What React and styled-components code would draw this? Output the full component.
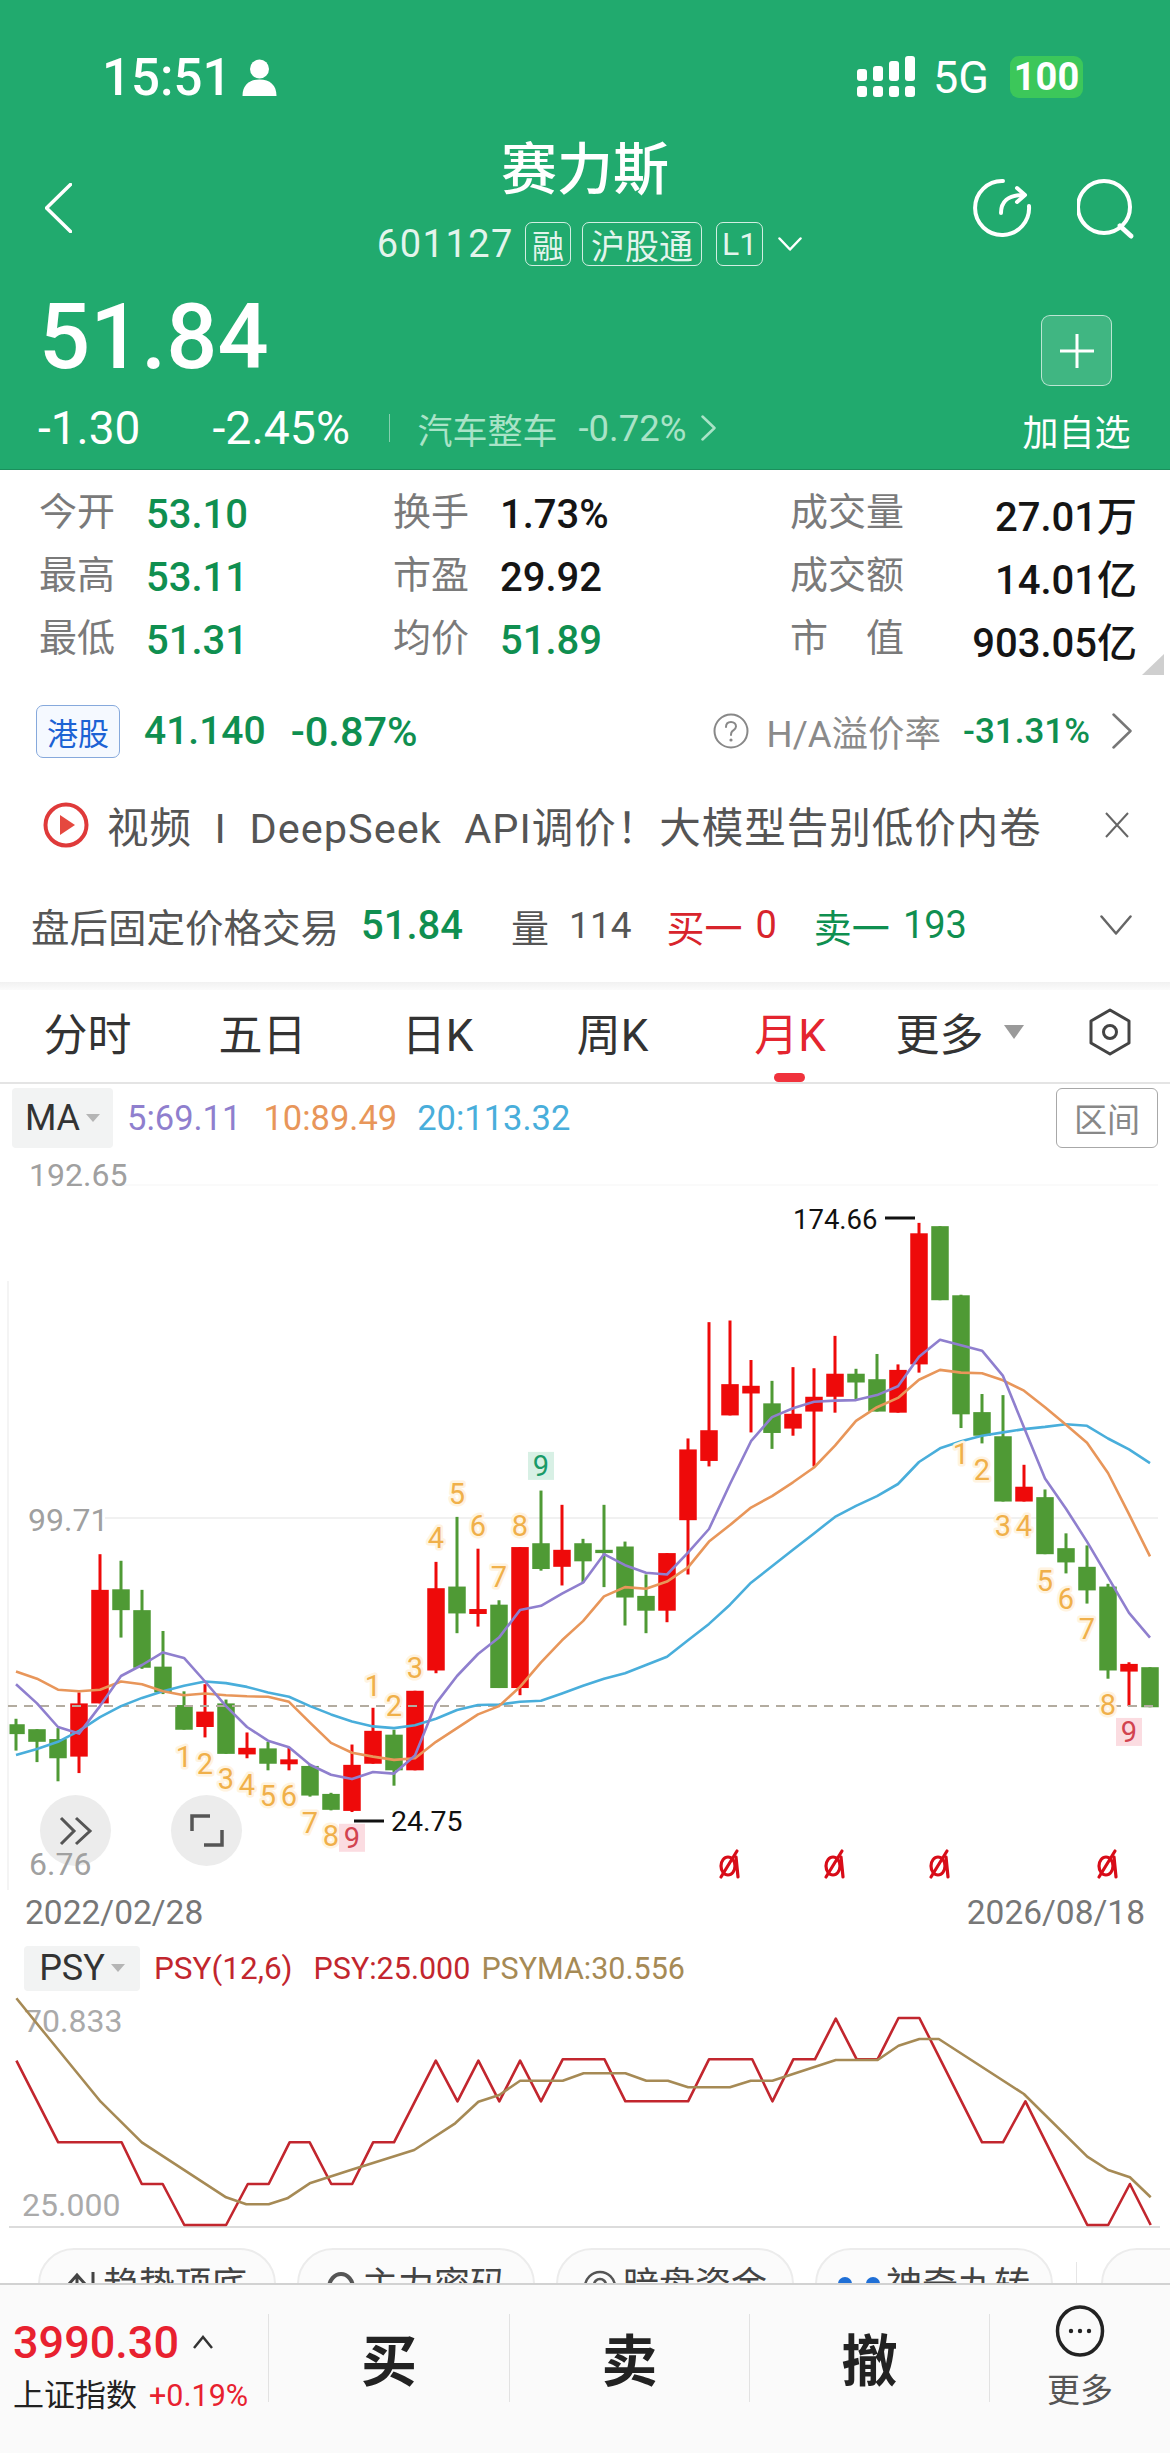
import React from 'react';
import styled, { createGlobalStyle } from 'styled-components';

const GlobalStyle = createGlobalStyle`
  html, body {
    margin: 0;
    padding: 0;
    background: #fff;
  }
  * {
    box-sizing: border-box;
  }
`;

const FONT = `Roboto, "Noto Sans CJK SC", sans-serif`;
const UP = '#ee0a0a';
const DOWN = '#4f9a35';
const GREEN_TEXT = '#0f8f50';

// chart values were read off the picture: y is in px from the top of the page
const toY = v => 1100 + v / 1.823;
const candleX = i => 16 + 21 * i;

// [colour, wick top, body top, body bottom, wick bottom]
const CANDLES = [
  ['g', 1128, 1138, 1156, 1186], ['g', 1147, 1147, 1170, 1207], ['g', 1145, 1165, 1200, 1242], ['r', 1080, 1100, 1197, 1227],
  ['r', 828, 893, 1100, 1100], ['g', 840, 892, 930, 980], ['g', 893, 930, 1035, 1037], ['g', 968, 1033, 1080, 1083],
  ['g', 1078, 1103, 1148, 1148], ['r', 1065, 1115, 1143, 1162], ['g', 1093, 1100, 1192, 1192], ['r', 1153, 1181, 1193, 1200],
  ['g', 1170, 1182, 1210, 1222], ['r', 1180, 1202, 1211, 1222], ['g', 1212, 1214, 1268, 1270], ['g', 1263, 1265, 1294, 1295],
  ['r', 1175, 1212, 1296, 1298], ['r', 1108, 1150, 1210, 1210], ['g', 1148, 1157, 1222, 1250], ['r', 1077, 1077, 1222, 1222],
  ['r', 842, 890, 1040, 1045], ['g', 760, 887, 936, 972], ['r', 818, 928, 937, 960], ['g', 912, 920, 1072, 1072],
  ['r', 815, 815, 1072, 1085], ['g', 712, 808, 855, 858], ['r', 738, 820, 851, 885], ['g', 800, 808, 841, 880],
  ['g', 738, 820, 826, 888], ['g', 805, 814, 907, 958], ['g', 865, 904, 931, 972], ['r', 826, 826, 931, 952],
  ['r', 617, 637, 766, 865], ['r', 405, 602, 658, 668], ['r', 402, 518, 575, 575], ['r', 474, 521, 535, 606],
  ['g', 512, 553, 607, 636], ['r', 487, 572, 599, 612], ['r', 489, 541, 568, 668], ['r', 430, 499, 541, 570],
  ['g', 490, 499, 515, 545], ['g', 463, 509, 568, 568], ['r', 482, 492, 570, 570], ['r', 224, 243, 482, 497],
  ['g', 230, 230, 365, 365], ['g', 355, 356, 573, 598], ['g', 536, 569, 612, 626], ['g', 538, 613, 732, 732],
  ['r', 665, 705, 732, 732], ['g', 710, 724, 828, 828], ['g', 790, 817, 843, 863], ['g', 812, 851, 894, 918],
  ['g', 882, 887, 1040, 1055], ['r', 1025, 1028, 1042, 1105], ['g', 1034, 1034, 1107, 1107],
];

const MA5 = [1065, 1100, 1143, 1155, 1105, 1050, 1030, 1007, 1017, 1060, 1105, 1143, 1168, 1180, 1212, 1230, 1238, 1225, 1228, 1195, 1100, 1050, 1010, 980, 930, 922, 900, 880, 828, 848, 862, 865, 825, 782, 700, 622, 578, 562, 550, 548, 547, 538, 522, 468, 437, 447, 457, 503, 597, 690, 745, 805, 870, 935, 980];
const MA10 = [1042, 1055, 1075, 1078, 1075, 1060, 1065, 1078, 1085, 1082, 1085, 1087, 1088, 1097, 1135, 1172, 1190, 1197, 1203, 1200, 1170, 1145, 1120, 1105, 1070, 1025, 985, 950, 905, 888, 891, 878, 852, 805, 775, 743, 722, 697, 670, 630, 585, 560, 543, 510, 492, 497, 498, 511, 530, 560, 592, 625, 680, 755, 832];
const MA20 = [1194, 1183, 1170, 1150, 1125, 1105, 1090, 1078, 1068, 1060, 1063, 1070, 1080, 1088, 1105, 1120, 1133, 1142, 1145, 1140, 1128, 1112, 1103, 1102, 1097, 1095, 1082, 1068, 1055, 1045, 1030, 1015, 985, 955, 920, 880, 850, 820, 790, 760, 740, 722, 700, 660, 635, 622, 612, 606, 600, 596, 591, 594, 617, 637, 662];

// [candle index, digit, y]
const TD_MARKS = [
  [8, 1, 1197], [9, 2, 1210], [10, 3, 1238], [11, 4, 1248], [12, 5, 1268], [13, 6, 1268], [14, 7, 1318], [15, 8, 1342],
  [17, 1, 1068], [18, 2, 1105], [19, 3, 1035], [20, 4, 798], [21, 5, 718], [22, 6, 776], [23, 7, 870], [24, 8, 776],
  [45, 1, 646], [46, 2, 674], [47, 3, 776], [48, 4, 776], [49, 5, 876], [50, 6, 910], [51, 7, 965], [52, 8, 1103],
];
const TD_NINES = [[16, 1345, 'sell'], [25, 667, 'buy'], [53, 1152, 'sell']];
const SIGNALS = [34, 39, 44, 52];

const PSY = [[22, 392], [78, 637], [163, 637], [190, 762], [218, 762], [247, 885], [303, 885], [332, 762], [360, 762], [388, 637], [415, 637], [444, 762], [472, 762], [500, 637], [528, 637], [584, 392], [613, 514], [641, 392], [669, 514], [697, 392], [725, 514], [754, 388], [810, 388], [838, 514], [922, 514], [950, 388], [1008, 388], [1035, 514], [1063, 388], [1092, 388], [1120, 266], [1148, 388], [1176, 388], [1204, 264], [1232, 264], [1316, 637], [1344, 637], [1374, 514], [1457, 885], [1485, 885], [1514, 762], [1542, 885]];
const PSYMA = [[22, 205], [60, 310], [135, 515], [190, 637], [303, 802], [330, 823], [360, 823], [385, 805], [415, 760], [470, 720], [555, 660], [610, 580], [641, 515], [669, 495], [697, 452], [754, 452], [782, 430], [838, 430], [866, 452], [895, 452], [922, 472], [978, 472], [1006, 452], [1035, 452], [1120, 390], [1176, 390], [1204, 347], [1232, 327], [1258, 327], [1372, 492], [1457, 680], [1485, 720], [1514, 742], [1542, 802]];

const maPoints = list => list.map((v, i) => `${candleX(i)},${toY(v).toFixed(1)}`).join(' ');
const psyPoints = list => list.map(([x, y]) => `${(x / 1.34).toFixed(1)},${(1930 + y / 3).toFixed(1)}`).join(' ');

const Page = styled.div`
  position: relative;
  width: 1170px;
  height: 2453px;
  overflow: hidden;
  background: #fff;
  font-family: ${FONT};
  color: #111;
`;

const Header = styled.header`
  height: 470px;
  background: #21aa6e;
  border-bottom: 1px solid #1b8f5c;
  color: #fff;
`;

const StatusBar = styled.div`
  height: 114px;
  padding: 40px 87px 0 102px;
  display: flex;
  align-items: center;
  justify-content: space-between;
`;

const StatusGroup = styled.div`
  display: flex;
  align-items: center;
`;

const Clock = styled.span`
  font-size: 51px;
  font-weight: 500;
  margin-right: 11px;
`;

const NetworkLabel = styled.span`
  font-size: 45px;
  margin: 0 21px 0 16px;
`;

const Battery = styled.span`
  width: 73px;
  height: 42px;
  border-radius: 9px;
  background: #3cc75a;
  font-size: 38px;
  font-weight: 700;
  display: flex;
  align-items: center;
  justify-content: center;
`;

const NavBar = styled.div`
  height: 156px;
  padding: 0 33px;
  display: grid;
  grid-template-columns: 1fr auto 1fr;
`;

const BackSlot = styled.div`
  display: flex;
  align-items: center;
  padding: 31px 0 0 12px;
`;

const TitleStack = styled.div`
  display: flex;
  flex-direction: column;
  align-items: center;
`;

const Title = styled.h1`
  margin: 24px 0 0;
  font-size: 56px;
  line-height: 64px;
  font-weight: 500;
`;

const CodeRow = styled.div`
  margin: 20px 0 0 9px;
  display: flex;
  align-items: center;
  color: rgba(255, 255, 255, 0.88);
`;

const Code = styled.span`
  font-size: 38px;
  letter-spacing: 1.5px;
  margin-right: 11px;
`;

const Tag = styled.span`
  height: 44px;
  padding: 0 ${p => p.$pad}px;
  margin-right: ${p => p.$gap}px;
  border: 1.5px solid rgba(255, 255, 255, 0.8);
  border-radius: 7px;
  font-size: ${p => p.$size || 32}px;
  display: flex;
  align-items: center;
`;

const NavActions = styled.div`
  display: flex;
  align-items: center;
  justify-content: flex-end;
  gap: 43px;
  padding-top: 31px;
`;

const QuoteRow = styled.div`
  height: 200px;
  padding: 23px 40px 0 38px;
  display: flex;
  justify-content: space-between;
`;

const Price = styled.div`
  font-size: 90px;
  line-height: 90px;
  font-weight: 500;
  margin-left: 1px;
`;

const MoveRow = styled.div`
  margin-top: 25px;
  height: 40px;
  display: flex;
  align-items: center;
`;

const Move = styled.span`
  font-size: ${p => p.$size}px;
  margin-right: ${p => p.$gap}px;
`;

const MoveDivider = styled.span`
  width: 1.5px;
  height: 28px;
  background: rgba(255, 255, 255, 0.45);
  margin-right: 27px;
`;

const Sector = styled.span`
  font-size: ${p => p.$size}px;
  color: #a9e3c7;
  margin-right: ${p => p.$gap}px;
`;

const AddColumn = styled.div`
  width: 107px;
  display: flex;
  flex-direction: column;
  align-items: center;
  padding-top: 22px;
`;

const AddButton = styled.div`
  width: 71px;
  height: 71px;
  border: 1.5px solid rgba(255, 255, 255, 0.65);
  border-radius: 9px;
  background: rgba(255, 255, 255, 0.14);
  display: flex;
  align-items: center;
  justify-content: center;
`;

const AddLabel = styled.span`
  margin-top: 18px;
  font-size: 36px;
  white-space: nowrap;
`;

const Stats = styled.section`
  position: relative;
  height: 210px;
  padding: 11px 33px 0 39px;
  display: grid;
  grid-template-columns: 354px 397px 1fr;
  grid-auto-rows: 63px;
`;

const StatCell = styled.div`
  display: flex;
  align-items: center;
  justify-content: ${p => (p.$spread ? 'space-between' : 'flex-start')};
`;

const StatLabel = styled.span`
  font-size: 38px;
  color: #7a7a7a;
  margin-top: -8px;
  width: ${p => (p.$spread ? 'auto' : '107px')};
`;

const StatValue = styled.span`
  font-size: 40px;
  font-weight: 500;
  margin-top: 3px;
  color: ${p => (p.$green ? GREEN_TEXT : '#151515')};
`;

const CornerMark = styled.span`
  position: absolute;
  right: 6px;
  top: 184px;
  border-style: solid;
  border-width: 0 0 21px 22px;
  border-color: transparent transparent #cfcfcf transparent;
`;

const HkRow = styled.section`
  height: 102px;
  padding: 0 38px 0 36px;
  display: flex;
  align-items: center;
`;

const HkBadge = styled.span`
  width: 84px;
  height: 53px;
  border: 1.5px solid #86a9dc;
  border-radius: 7px;
  background: #f5f9ff;
  color: #1c62d4;
  font-size: 31px;
  display: flex;
  align-items: center;
  justify-content: center;
  margin-right: 24px;
`;

const GreenNumber = styled.span`
  font-size: ${p => p.$size || 39}px;
  font-weight: 500;
  color: ${GREEN_TEXT};
  margin-right: ${p => p.$gap || 0}px;
`;

const PremiumGroup = styled.div`
  margin-left: auto;
  display: flex;
  align-items: center;
`;

const PremiumLabel = styled.span`
  font-size: 36.5px;
  color: #8a8a8a;
  margin: 0 22px 0 18px;
`;

const NewsRow = styled.section`
  height: 86px;
  padding: 0 40px 0 43px;
  display: flex;
  align-items: center;
`;

const NewsText = styled.span`
  flex: 1;
  margin-left: 18px;
  font-size: 41.5px;
  letter-spacing: 1px;
  color: #555;
  white-space: pre;
`;

const AfterRow = styled.section`
  height: 114px;
  padding: 0 38px 0 31px;
  display: flex;
  align-items: center;
`;

const AfterText = styled.span`
  font-size: ${p => p.$size || 38}px;
  color: ${p => p.$color || '#555'};
  margin-right: ${p => p.$gap || 0}px;
  font-weight: ${p => p.$weight || 400};
`;

const Band = styled.div`
  height: 8px;
  background: linear-gradient(#f1f1f1, #fbfbfb);
`;

const Tabs = styled.nav`
  height: 94px;
  padding-bottom: 8px;
  border-bottom: 2px solid #e4e4e4;
  display: grid;
  grid-template-columns: repeat(6, 175px) 1fr;
`;

const Tab = styled.div`
  position: relative;
  display: flex;
  align-items: center;
  justify-content: center;
  gap: 14px;
  font-size: 44px;
  color: ${p => (p.$active ? '#e4252f' : '#333')};

  ${p => p.$active && `
    padding-left: 5px;

    &::after {
      content: '';
      position: absolute;
      left: 74px;
      bottom: -8px;
      width: 31px;
      height: 9px;
      border-radius: 5px;
      background: #f0323c;
    }
  `}
`;

const TabCaret = styled.span`
  margin: 0 6px;
  border-style: solid;
  border-width: 14px 10px 0 10px;
  border-color: #9a9a9a transparent transparent transparent;
`;

const IndicatorBar = styled.div`
  height: ${p => p.$height}px;
  padding: ${p => p.$top || 0}px 12px 0;
  display: flex;
  align-items: center;
`;

const IndicatorBox = styled.div`
  width: ${p => p.$width}px;
  height: ${p => p.$height}px;
  margin-left: ${p => p.$left || 0}px;
  border-radius: 4px;
  background: #f2f3f3;
  display: flex;
  align-items: center;
  justify-content: center;
  gap: 6px;
  font-size: 36px;
  color: #333;
`;

const SmallCaret = styled.span`
  border-style: solid;
  border-width: 8px 7px 0 7px;
  border-color: #b5b5b5 transparent transparent transparent;
`;

const Legend = styled.span`
  font-size: ${p => p.$size || 34.5}px;
  color: ${p => p.$color};
  margin-left: ${p => p.$gap}px;
  white-space: nowrap;
`;

const RangeButton = styled.div`
  margin-left: auto;
  width: 102px;
  height: 60px;
  border: 1.5px solid #a8a8a8;
  border-radius: 6px;
  color: #888;
  font-size: 33px;
  display: flex;
  align-items: center;
  justify-content: center;
`;

const ChartArea = styled.div`
  position: relative;
  height: 738px;
`;

const ChartSvg = styled.svg`
  display: block;
  width: 1170px;
`;

const AxisText = styled.text`
  font-family: ${FONT};
  font-size: ${p => p.$size || 32}px;
  fill: ${p => p.$color || '#a0a0a0'};
`;

const TdText = styled.text`
  font-family: ${FONT};
  font-size: 29px;
  text-anchor: middle;
  fill: ${p => (p.$tone === 'sell' ? '#d2434f' : p.$tone === 'buy' ? '#1a9a68' : '#f0b04a')};
  ${p => !p.$tone && `
    stroke: #fff3e0;
    stroke-width: 5px;
    paint-order: stroke;
    stroke-linejoin: round;
  `}
`;

const RoundButton = styled.button`
  position: absolute;
  left: ${p => p.$left}px;
  top: 643px;
  width: 71px;
  height: 71px;
  padding: 0;
  border: none;
  border-radius: 50%;
  background: #ececec;
  display: flex;
  align-items: center;
  justify-content: center;
`;

const FloorLabel = styled.span`
  position: absolute;
  left: 29px;
  top: 693px;
  font-size: 32px;
  line-height: 38px;
  color: #a0a0a0;
`;

const DateRow = styled.div`
  height: 45px;
  padding: 0 25px;
  display: flex;
  align-items: center;
  justify-content: space-between;
  font-size: 33.5px;
  color: #777;
`;

const ChipRow = styled.div`
  height: 55px;
  padding: 20px 0 0 38px;
  display: flex;
  gap: 21px;
  overflow: hidden;
`;

const Chip = styled.div`
  flex: none;
  width: 238px;
  height: 100px;
  border: 2px solid #ececec;
  border-radius: 36px;
  background: #fbfbfb;
  padding-top: 14px;
  display: flex;
  justify-content: center;
  gap: 6px;
  font-size: 36px;
  line-height: 44px;
  color: #444;
`;

const ChipIcon = styled.svg`
  flex: none;
  margin-top: 6px;
`;

const ChipDot = styled.span`
  flex: none;
  width: 14px;
  height: 14px;
  margin-top: 13px;
  margin-right: ${p => p.$gap || 0}px;
  border-radius: 50%;
  background: #1f6fd6;
`;

const ChipDivider = styled.span`
  flex: none;
  width: 1px;
  height: 40px;
  margin: 14px 3px 0 2px;
  background: #e6e6e6;
`;

const Footer = styled.footer`
  height: 170px;
  padding-top: 29px;
  border-top: 2px solid #d2d2d2;
  background: #fafafa;
  display: grid;
  grid-template-columns: 268px 241px 240px 240px 1fr;
  align-items: start;
`;

const IndexCell = styled.div`
  height: 88px;
  padding-left: 13px;
`;

const IndexValue = styled.div`
  height: 56px;
  display: flex;
  align-items: center;
  gap: 13px;
  font-size: 45px;
  font-weight: 500;
  color: #e8212f;
`;

const IndexLine = styled.div`
  margin-top: 3px;
  display: flex;
  align-items: center;
  gap: 12px;
  font-size: 31px;
  line-height: 46px;
  color: #222;
  white-space: nowrap;
`;

const IndexChange = styled.span`
  font-size: 30.5px;
  color: #e8212f;
`;

const ActionCell = styled.div`
  height: 88px;
  padding-bottom: 4px;
  border-left: 1.5px solid #e2e2e2;
  display: flex;
  align-items: center;
  justify-content: center;
  font-size: 56px;
  font-weight: 700;
  color: #222;
`;

const MoreCell = styled.div`
  height: 88px;
  border-left: 1.5px solid #e2e2e2;
  display: flex;
  flex-direction: column;
  align-items: center;
  font-size: 33px;
  color: #555;
`;

const MoreIcon = styled.svg`
  flex: none;
  margin-top: -9px;
  margin-bottom: 7px;
`;

const Chevron = ({ dir = 'right', w = 16, h = 28, color = '#fff', stroke = 2.5 }) => {
  const paths = {
    right: `M1.5 1.5 L${w - 1.5} ${h / 2} L1.5 ${h - 1.5}`,
    left: `M${w - 1.5} 1.5 L1.5 ${h / 2} L${w - 1.5} ${h - 1.5}`,
    down: `M1.5 1.5 L${w / 2} ${h - 1.5} L${w - 1.5} 1.5`,
  };
  return (
    <svg width={w} height={h} viewBox={`0 0 ${w} ${h}`} fill="none">
      <path d={paths[dir]} stroke={color} strokeWidth={stroke} strokeLinejoin="round" strokeLinecap="round" />
    </svg>
  );
};

const PersonIcon = () => (
  <svg width="35" height="37" viewBox="0 0 35 37" fill="#fff">
    <circle cx="17.5" cy="10" r="9.5" />
    <path d="M0.5 37 C0.5 26 7 20.5 17.5 20.5 C28 20.5 34.5 26 34.5 37 Z" />
  </svg>
);

const SignalIcon = () => (
  <svg width="60" height="42" viewBox="0 0 60 42" fill="#fff">
    <rect x="0" y="30" width="10" height="11" rx="3" />
    <rect x="16" y="30" width="10" height="11" rx="3" />
    <rect x="32" y="30" width="10" height="11" rx="3" />
    <rect x="48" y="30" width="10" height="11" rx="3" />
    <rect x="0" y="13" width="10" height="12" rx="3" />
    <rect x="16" y="10" width="10" height="15" rx="3" />
    <rect x="32" y="5" width="10" height="20" rx="3" />
    <rect x="48" y="0" width="10" height="25" rx="3" />
  </svg>
);

const RefreshIcon = () => (
  <svg width="64" height="64" viewBox="0 0 64 64" fill="none" stroke="#fff" strokeWidth="4" strokeLinecap="round" strokeLinejoin="round">
    <path d="M33 5 A27 27 0 1 0 59 30" />
    <path d="M31 37 C31 26 38 19 53 19" />
    <path d="M47 12 L55 19 L47 26" />
  </svg>
);

const SearchIcon = () => (
  <svg width="60" height="64" viewBox="0 0 60 64" fill="none" stroke="#fff" strokeWidth="4" strokeLinecap="round">
    <circle cx="27" cy="31" r="26" />
    <path d="M43 50 L54 60" strokeWidth="5" />
  </svg>
);

const PlusIcon = () => (
  <svg width="36" height="36" viewBox="0 0 36 36" stroke="#fff" strokeWidth="3">
    <path d="M18 1 V35 M1 18 H35" />
  </svg>
);

const QuestionIcon = () => (
  <svg width="36" height="36" viewBox="0 0 36 36" fill="none">
    <circle cx="18" cy="18" r="16.5" stroke="#888" strokeWidth="2" />
    <path d="M13 14 C13 10.5 15.5 9 18 9 C21 9 23 11 23 13.5 C23 16 20.5 17 19 18.5 C18.3 19.3 18 20 18 22" stroke="#888" strokeWidth="2" strokeLinecap="round" />
    <circle cx="18" cy="27" r="1.6" fill="#888" />
  </svg>
);

const PlayIcon = () => (
  <svg width="46" height="46" viewBox="0 0 46 46" fill="none">
    <circle cx="23" cy="23" r="20.5" stroke="#df3a3a" strokeWidth="4" />
    <path d="M17 13 L32 23 L17 33 Z" fill="#e5483f" />
  </svg>
);

const CloseIcon = () => (
  <svg width="26" height="26" viewBox="0 0 26 26" stroke="#666" strokeWidth="2">
    <path d="M2 1 L24 25 M24 1 L2 25" />
  </svg>
);

const HexIcon = () => (
  <svg width="42" height="48" viewBox="0 0 42 48" fill="none" stroke="#444" strokeWidth="3" strokeLinejoin="round">
    <path d="M21 2 L40 13 V35 L21 46 L2 35 V13 Z" />
    <circle cx="21" cy="24" r="6.5" />
  </svg>
);

const ForwardIcon = () => (
  <svg width="34" height="30" viewBox="0 0 34 30" fill="none" stroke="#555" strokeWidth="3">
    <path d="M2 2 L15 15 L2 28 M17 2 L31 15 L17 28" />
  </svg>
);

const FullscreenIcon = () => (
  <svg width="34" height="33" viewBox="0 0 34 33" fill="none" stroke="#555" strokeWidth="3.5">
    <path d="M2 17 V2 H20 M32 16 V31 H14" />
  </svg>
);

const Candle = ({ data, index }) => {
  const [kind, wickTop, bodyTop, bodyBottom, wickBottom] = data;
  const x = candleX(index);
  const color = kind === 'r' ? UP : DOWN;
  const left = Math.max(x - 8.75, 9.5);
  return (
    <g fill={color}>
      <rect x={x - 1.5} y={toY(wickTop)} width="3" height={toY(wickBottom) - toY(wickTop)} />
      <rect x={left} y={toY(bodyTop)} width={x + 8.75 - left} height={toY(bodyBottom) - toY(bodyTop)} />
    </g>
  );
};

const SignalMark = ({ x }) => (
  <g fill="none" stroke="#d80c18" strokeWidth="3.2" strokeLinecap="round">
    <ellipse cx={x - 2} cy="1866" rx="7" ry="9" />
    <path d={`M${x + 6} 1857 L${x + 8} 1877`} />
    <path d={`M${x + 7} 1851 L${x - 9} 1877`} />
  </g>
);

const KlineChart = () => (
  <ChartSvg height="738" viewBox="0 1152 1170 738">
    <path d="M8 1281 V1890" stroke="#f4f4f4" strokeWidth="2" />
    <path d="M105 1518 H1158" stroke="#f1f1f1" strokeWidth="2" />
    <path d="M104 1185 H1158" stroke="#fafafa" strokeWidth="2" />
    <AxisText x="29" y="1186">192.65</AxisText>
    <AxisText x="28" y="1531">99.71</AxisText>
    {CANDLES.map((c, i) => <Candle key={i} data={c} index={i} />)}
    <path d="M8 1706 H1158" stroke="#b3aca0" strokeWidth="2" strokeDasharray="9 7" />
    <polyline points={maPoints(MA20)} fill="none" stroke="#49aedb" strokeWidth="2.6" strokeLinejoin="round" />
    <polyline points={maPoints(MA10)} fill="none" stroke="#e8965a" strokeWidth="2.6" strokeLinejoin="round" />
    <polyline points={maPoints(MA5)} fill="none" stroke="#8f7fce" strokeWidth="2.6" strokeLinejoin="round" />
    {TD_MARKS.map(([i, n, y]) => (
      <TdText key={`${i}-${n}`} x={candleX(i)} y={toY(y) + 10}>{n}</TdText>
    ))}
    {TD_NINES.map(([i, y, tone]) => (
      <g key={i}>
        <rect x={candleX(i) - 13} y={toY(y) - 14} width="26" height="28" fill={tone === 'sell' ? '#fbdce1' : '#d8f0e5'} />
        <TdText $tone={tone} x={candleX(i)} y={toY(y) + 10}>9</TdText>
      </g>
    ))}
    <path d="M885 1218 H915 M354 1821 H384" stroke="#111" strokeWidth="3" />
    <AxisText $color="#111" $size={27.5} x="793" y="1229">174.66</AxisText>
    <AxisText $color="#111" $size={28.5} x="391" y="1831">24.75</AxisText>
    {SIGNALS.map(i => <SignalMark key={i} x={candleX(i)} />)}
  </ChartSvg>
);

const PsyChart = () => (
  <ChartSvg height="235" viewBox="0 1993 1170 235">
    <path d="M9 2227 H1160" stroke="#dcdcdc" strokeWidth="2" />
    <AxisText $color="#aaa" x="24" y="2032">70.833</AxisText>
    <AxisText $color="#aaa" x="22" y="2216">25.000</AxisText>
    <polyline points={psyPoints(PSY)} fill="none" stroke="#c2262e" strokeWidth="2.6" strokeLinejoin="round" />
    <polyline points={psyPoints(PSYMA)} fill="none" stroke="#a68a55" strokeWidth="2.6" strokeLinejoin="round" />
  </ChartSvg>
);

const STATS = [
  ['今开', '53.10', true], ['换手', '1.73%', false], ['成交量', '27.01万', false],
  ['最高', '53.11', true], ['市盈', '29.92', false], ['成交额', '14.01亿', false],
  ['最低', '51.31', true], ['均价', '51.89', true], ['市　值', '903.05亿', false],
];

const TABS = ['分时', '五日', '日K', '周K', '月K'];

export default function App() {
  return (
    <Page>
      <GlobalStyle />
      <Header>
        <StatusBar>
          <StatusGroup>
            <Clock>15:51</Clock>
            <PersonIcon />
          </StatusGroup>
          <StatusGroup>
            <SignalIcon />
            <NetworkLabel>5G</NetworkLabel>
            <Battery>100</Battery>
          </StatusGroup>
        </StatusBar>
        <NavBar>
          <BackSlot>
            <Chevron dir="left" w={27} h={50} stroke={3.5} />
          </BackSlot>
          <TitleStack>
            <Title>赛力斯</Title>
            <CodeRow>
              <Code>601127</Code>
              <Tag $pad={6} $gap={11}>融</Tag>
              <Tag $pad={8} $gap={14} $size={34}>沪股通</Tag>
              <Tag $pad={5} $gap={15}>L1</Tag>
              <Chevron dir="down" w={24} h={14} stroke={2.5} />
            </CodeRow>
          </TitleStack>
          <NavActions>
            <RefreshIcon />
            <SearchIcon />
          </NavActions>
        </NavBar>
        <QuoteRow>
          <div>
            <Price>51.84</Price>
            <MoveRow>
              <Move $size={46} $gap={72}>-1.30</Move>
              <Move $size={46.5} $gap={39}>-2.45%</Move>
              <MoveDivider />
              <Sector $size={35} $gap={21}>汽车整车</Sector>
              <Sector $size={36.5} $gap={14}>-0.72%</Sector>
              <Chevron w={15} h={26} color="#a9e3c7" />
            </MoveRow>
          </div>
          <AddColumn>
            <AddButton>
              <PlusIcon />
            </AddButton>
            <AddLabel>加自选</AddLabel>
          </AddColumn>
        </QuoteRow>
      </Header>

      <Stats>
        {STATS.map(([label, value, green], i) => (
          <StatCell key={label} $spread={i % 3 === 2}>
            <StatLabel $spread={i % 3 === 2}>{label}</StatLabel>
            <StatValue $green={green}>{value}</StatValue>
          </StatCell>
        ))}
        <CornerMark />
      </Stats>

      <HkRow>
        <HkBadge>港股</HkBadge>
        <GreenNumber $gap={25}>41.140</GreenNumber>
        <GreenNumber $size={41.5}>-0.87%</GreenNumber>
        <PremiumGroup>
          <QuestionIcon />
          <PremiumLabel>H/A溢价率</PremiumLabel>
          <GreenNumber $size={35} $gap={22}>-31.31%</GreenNumber>
          <Chevron w={20} h={36} color="#777" />
        </PremiumGroup>
      </HkRow>

      <NewsRow>
        <PlayIcon />
        <NewsText>视频  I  DeepSeek  API调价！大模型告别低价内卷</NewsText>
        <CloseIcon />
      </NewsRow>

      <AfterRow>
        <AfterText $size={38.5} $gap={22}>盘后固定价格交易</AfterText>
        <AfterText $size={40} $color={GREEN_TEXT} $weight={500} $gap={48}>51.84</AfterText>
        <AfterText $gap={20}>量</AfterText>
        <AfterText $size={37} $gap={35}>114</AfterText>
        <AfterText $color="#d8242c" $gap={13}>买一</AfterText>
        <AfterText $color="#d8242c" $gap={37}>0</AfterText>
        <AfterText $color={GREEN_TEXT} $gap={13}>卖一</AfterText>
        <AfterText $color={GREEN_TEXT}>193</AfterText>
        <PremiumGroup>
          <Chevron dir="down" w={32} h={20} color="#666" />
        </PremiumGroup>
      </AfterRow>

      <Band />

      <Tabs>
        {TABS.map(t => <Tab key={t} $active={t === '月K'}>{t}</Tab>)}
        <Tab>更多<TabCaret /></Tab>
        <Tab><HexIcon /></Tab>
      </Tabs>

      <IndicatorBar $height={68}>
        <IndicatorBox $width={101} $height={60}>MA<SmallCaret /></IndicatorBox>
        <Legend $color="#8f7fce" $gap={14}>5:69.11</Legend>
        <Legend $color="#e8965a" $gap={22}>10:89.49</Legend>
        <Legend $color="#49aedb" $gap={20}>20:113.32</Legend>
        <RangeButton>区间</RangeButton>
      </IndicatorBar>

      <ChartArea>
        <KlineChart />
        <RoundButton $left={40}><ForwardIcon /></RoundButton>
        <RoundButton $left={171}><FullscreenIcon /></RoundButton>
        <FloorLabel>6.76</FloorLabel>
      </ChartArea>

      <DateRow>
        <span>2022/02/28</span>
        <span>2026/08/18</span>
      </DateRow>

      <IndicatorBar $height={58} $top={8}>
        <IndicatorBox $width={116} $height={45} $left={12}>PSY<SmallCaret /></IndicatorBox>
        <Legend $size={31.5} $color="#c2262e" $gap={14}>PSY(12,6)</Legend>
        <Legend $size={30.5} $color="#c2262e" $gap={21}>PSY:25.000</Legend>
        <Legend $size={30.5} $color="#a68a55" $gap={11}>PSYMA:30.556</Legend>
      </IndicatorBar>

      <PsyChart />

      <ChipRow>
        <Chip>
          <ChipIcon width="30" height="30" viewBox="0 0 30 30" fill="none" stroke="#444" strokeWidth="3">
            <path d="M2 14 L10 5 L18 14 M10 5 V30 M26 2 V30" />
          </ChipIcon>
          趋势顶底
        </Chip>
        <Chip>
          <ChipIcon width="30" height="36" viewBox="0 0 30 36" fill="none" stroke="#555" strokeWidth="4">
            <ellipse cx="15" cy="18" rx="12" ry="14" />
          </ChipIcon>
          主力密码
        </Chip>
        <Chip>
          <ChipIcon width="34" height="34" viewBox="0 0 34 34" fill="none" stroke="#555" strokeWidth="2.5">
            <circle cx="17" cy="17" r="15" />
            <circle cx="17" cy="15" r="6" />
          </ChipIcon>
          暗盘资金
        </Chip>
        <Chip>
          <ChipDot $gap={8} />
          <ChipDot />
          神奇九转
        </Chip>
        <ChipDivider />
        <Chip>
          <ChipIcon width="36" height="36" viewBox="0 0 36 36" fill="none" stroke="#1f6fd6" strokeWidth="3">
            <circle cx="18" cy="18" r="16" />
            <path d="M18 2 V16" />
          </ChipIcon>
        </Chip>
      </ChipRow>

      <Footer>
        <IndexCell>
          <IndexValue>
            3990.30
            <svg width="22" height="14" viewBox="0 0 22 14" fill="none" stroke="#333" strokeWidth="2.5">
              <path d="M2 13 L11 2 L20 13" />
            </svg>
          </IndexValue>
          <IndexLine>上证指数<IndexChange>+0.19%</IndexChange></IndexLine>
        </IndexCell>
        <ActionCell>买</ActionCell>
        <ActionCell>卖</ActionCell>
        <ActionCell>撤</ActionCell>
        <MoreCell>
          <MoreIcon width="50" height="52" viewBox="0 0 50 52" fill="none">
            <ellipse cx="25" cy="26" rx="22.5" ry="24" stroke="#222" strokeWidth="3.5" />
            <circle cx="16" cy="26" r="2.2" fill="#222" />
            <circle cx="25" cy="26" r="2.2" fill="#222" />
            <circle cx="34" cy="26" r="2.2" fill="#222" />
          </MoreIcon>
          更多
        </MoreCell>
      </Footer>
    </Page>
  );
}
